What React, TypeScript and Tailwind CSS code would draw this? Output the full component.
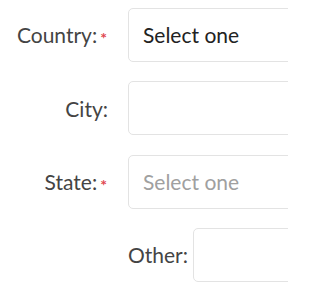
import React from 'react';

const Label: React.FC<{ text: string; required?: boolean }> = ({ text, required }) => (
  <div className="w-[108px] shrink-0 flex items-center justify-end text-[21px] text-[#444]">
    <span>{text}</span>
    {required && (
      <span className="ml-[3px] mr-[1px] text-[16px] leading-none font-bold text-[#e0484f] translate-y-[3px]">*</span>
    )}
  </div>
);

const Box: React.FC<{ children?: React.ReactNode; className?: string }> = ({ children, className }) => (
  <div
    className={
      'h-[54px] w-[300px] shrink-0 rounded-[5px] border border-[#e3e3e3] bg-white flex items-center px-[14px] text-[21px] ' +
      (className ?? '')
    }
  >
    {children}
  </div>
);

export default function App() {
  return (
    <div
      className="w-[288px] h-[288px] overflow-hidden bg-white pt-[8px] flex flex-col gap-[19.4px]"
      style={{ fontFamily: 'Lato, "Open Sans", sans-serif' }}
    >
      <div className="flex items-center gap-[20px]">
        <Label text="Country:" required />
        <Box className="text-[#222]">Select one</Box>
      </div>
      <div className="flex items-center gap-[20px]">
        <Label text="City:" />
        <Box />
      </div>
      <div className="flex items-center gap-[20px]">
        <Label text="State:" required />
        <Box className="text-[#a0a0a0]">Select one</Box>
      </div>
      <div className="flex items-center gap-[5px] pl-[128px]">
        <span className="text-[21px] text-[#444]">Other:</span>
        <Box />
      </div>
    </div>
  );
}
